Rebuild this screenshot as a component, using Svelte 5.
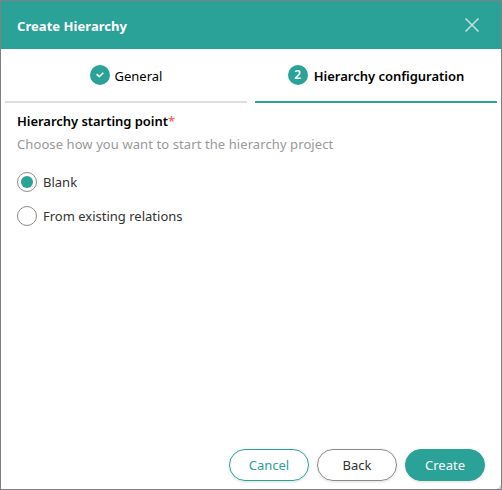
<script>
  let start = $state('blank');
  const options = [
    { id: 'blank', label: 'Blank' },
    { id: 'relations', label: 'From existing relations' }
  ];
</script>

<div class="dialog">
  <header>
    <h1>Create Hierarchy</h1>
    <button class="close" aria-label="Close">
      <svg width="14" height="14" viewBox="0 0 14 14"><path d="M.5.5l13 13M13.5.5L.5 13.5" /></svg>
    </button>
  </header>

  <nav>
    <div class="step">
      <span class="badge"><svg width="8" height="6" viewBox="0 0 8 6"><path d="M.7 2.1l2.6 2.6L7.3.7" /></svg></span>
      <span class="general">General</span>
    </div>
    <div class="step active">
      <span class="badge">2</span>
      <span class="config">Hierarchy configuration</span>
    </div>
  </nav>

  <main>
    <h2><span class="title">Hierarchy starting point</span><span class="required">*</span></h2>
    <p>Choose how you want to start the hierarchy project</p>
    <div class="options" role="radiogroup">
      {#each options as option}
        <button class="option" role="radio" aria-checked={start === option.id} onclick={() => (start = option.id)}>
          <span class="radio" class:selected={start === option.id}></span>
          <span class="label">{option.label}</span>
        </button>
      {/each}
    </div>
  </main>

  <footer>
    <button class="action cancel">Cancel</button>
    <button class="action back">Back</button>
    <button class="action create">Create</button>
  </footer>
</div>

<style>
  .dialog {
    box-sizing: border-box;
    width: 502px;
    height: 490px;
    display: flex;
    flex-direction: column;
    border: 1px solid #808080;
    background: #d4d4d4;
    color: #000;
    font: 13px/20px "Noto Sans", "Open Sans", sans-serif;
    overflow: hidden;
    white-space: nowrap;
  }
  button { margin: 0; padding: 0; border: 0; background: none; font: inherit; color: inherit; }
  nav, main, footer { background: #fff; }
  header {
    height: 48px;
    flex: none;
    display: flex;
    align-items: center;
    justify-content: space-between;
    padding: 0 22px 0 16px;
    background: #2aa298;
    color: #fff;
  }
  h1 { margin: 2px 0 0; font-size: 13px; line-height: 20px; font-weight: 700; letter-spacing: .05px; }
  .close { display: flex; width: 14px; height: 14px; }
  .close path { fill: none; stroke: #c0e3e0; stroke-width: 1.5; }
  nav { display: flex; gap: 8px; padding: 0 4px; height: 54px; flex: none; }
  .step {
    box-sizing: border-box;
    flex: 1;
    display: flex;
    justify-content: center;
    gap: 5px;
    padding-top: 16px;
    border-bottom: 2px solid #dedede;
  }
  .step > span:last-child { padding-top: 1px; }
  .active { border-color: #2aa298; font-weight: 600; gap: 6px; }
  .config { letter-spacing: -.02px; }
  .badge {
    width: 20px;
    height: 20px;
    display: flex;
    align-items: center;
    justify-content: center;
    border-radius: 50%;
    background: #2aa298;
    color: #fff;
    font-size: 12px;
    line-height: 22px;
    font-weight: 600;
  }
  .badge path { fill: none; stroke: #fff; stroke-width: 1.6; }
  main { flex: 1; padding: 8px 16px 0; }
  h2 { margin: 0; font-size: 13px; line-height: 20px; font-weight: 600; }
  .title { letter-spacing: -.04px; }
  .required { color: #f26666; }
  p { margin: 3px 0 0; color: #999; letter-spacing: .09px; }
  .options { display: flex; flex-direction: column; align-items: flex-start; gap: 14px; margin-top: 18px; }
  .option { display: flex; align-items: center; gap: 6px; height: 20px; color: #333; }
  .radio {
    box-sizing: border-box;
    width: 20px;
    height: 20px;
    border: 1px solid #8c8c8c;
    border-radius: 50%;
    display: flex;
    align-items: center;
    justify-content: center;
  }
  .selected::before { content: ""; width: 12px; height: 12px; border-radius: 50%; background: #2aa298; }
  footer {
    display: flex;
    justify-content: flex-end;
    gap: 8px;
    padding: 0 16px 8px;
    border-bottom-right-radius: 6px;
  }
  .action {
    box-sizing: border-box;
    width: 80px;
    height: 32px;
    border: 1px solid #8a8a8a;
    border-radius: 16px;
    box-shadow: 0 1px 3px #0002;
    color: #333;
  }
  .cancel { border-color: #2aa298; color: #2aa298; }
  .create { border-color: #2aa298; background: #2aa298; color: #fff; }
</style>
